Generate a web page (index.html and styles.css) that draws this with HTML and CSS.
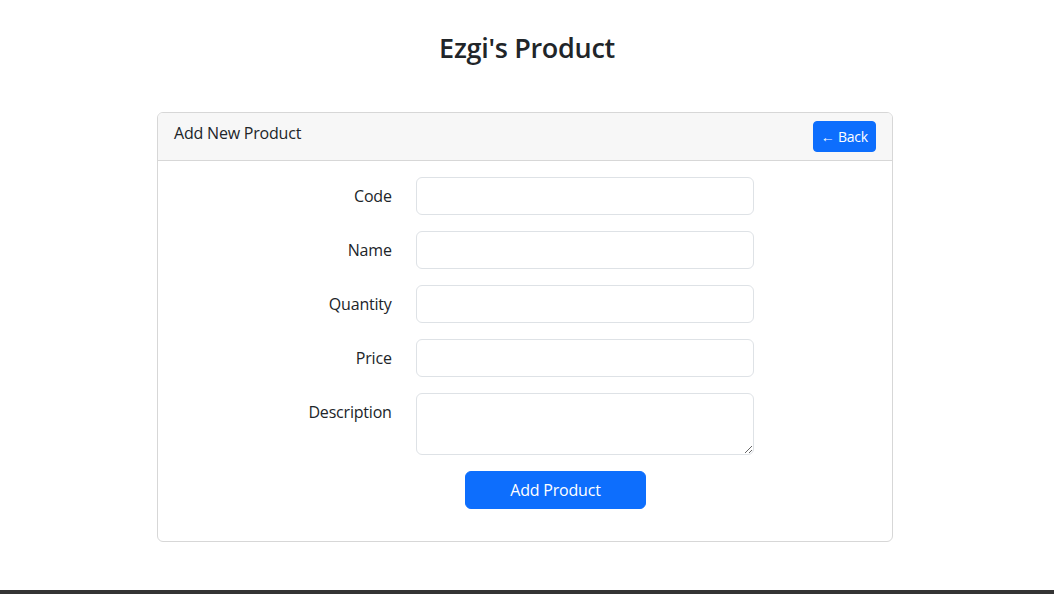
FILE: index.html
```html
<!DOCTYPE html>
<html lang="en">
<head>
<meta charset="utf-8">
<title>Ezgi's Product</title>
<link rel="stylesheet" href="styles.css">
</head>
<body>
<main class="page">
  <h3 class="title">Ezgi's Product</h3>
  <div class="card">
    <div class="card-header">
      <span class="card-title">Add New Product</span>
      <button class="btn btn-sm" type="button">&larr; Back</button>
    </div>
    <div class="card-body">
      <form class="form">
        <div class="form-row">
          <label class="form-label" for="code">Code</label>
          <input class="form-control" id="code" type="text">
        </div>
        <div class="form-row">
          <label class="form-label" for="name">Name</label>
          <input class="form-control" id="name" type="text">
        </div>
        <div class="form-row">
          <label class="form-label" for="qty">Quantity</label>
          <input class="form-control" id="qty" type="text">
        </div>
        <div class="form-row">
          <label class="form-label" for="price">Price</label>
          <input class="form-control" id="price" type="text">
        </div>
        <div class="form-row">
          <label class="form-label" for="desc">Description</label>
          <textarea class="form-control textarea" id="desc" rows="2"></textarea>
        </div>
        <div class="submit-row">
          <button class="btn btn-lg" type="submit">Add Product</button>
        </div>
      </form>
    </div>
  </div>
</main>
<footer class="footer"></footer>
</body>
</html>
```
FILE: styles.css
```css
* { box-sizing: border-box; }
html, body { margin: 0; padding: 0; }
body {
  font-family: "Open Sans", "Noto Sans", "Liberation Sans", sans-serif;
  font-size: 16px;
  line-height: 1.5;
  letter-spacing: -0.2px;
  color: #212529;
  background: #fff;
}
.page {
  padding-top: 32px;
  padding-bottom: 48px;
}
.title {
  margin: 0 0 48px;
  text-align: center;
  font-size: 27px;
  font-weight: 600;
  line-height: 1.2;
  letter-spacing: -0.3px;
}
.card {
  width: 736px;
  margin-left: 157px;
  border: 1px solid #d7d7d7;
  border-radius: 6px;
  background: #fff;
}
.card-header {
  display: flex;
  justify-content: space-between;
  align-items: flex-start;
  padding: 8px 16px;
  background: #f7f7f7;
  border-bottom: 1px solid #d7d7d7;
  border-radius: 5px 5px 0 0;
}
.card-title { font-size: 16px; line-height: 24px; }
.btn {
  font-family: inherit;
  letter-spacing: inherit;
  color: #fff;
  background: #0d6efd;
  border: 1px solid #0d6efd;
  cursor: pointer;
  white-space: nowrap;
}
.btn-sm {
  font-size: 14px;
  line-height: 21px;
  padding: 4px 7px;
  border-radius: 4px;
  height: 31px;
}
.btn-lg {
  font-size: 16px;
  line-height: 24px;
  padding: 6px 12px;
  border-radius: 6px;
  width: 181px;
  height: 38px;
}
.card-body { padding: 16px; }
.form-row {
  display: grid;
  grid-template-columns: 217.7px 338.5px;
  column-gap: 24px;
  margin-bottom: 16px;
}
.form-label {
  text-align: right;
  padding-top: 7px;
  line-height: 24px;
}
.form-control {
  display: block;
  width: 100%;
  height: 38px;
  padding: 6px 12px;
  font-family: inherit;
  font-size: 16px;
  line-height: 24px;
  color: #212529;
  background: #fff;
  border: 1px solid #dee2e6;
  border-radius: 6px;
}
.textarea { height: 62px; resize: vertical; }
.submit-row {
  padding-left: 291px;
  margin-bottom: 16px;
}
.footer {
  height: 60px;
  background: #343434;
}
```
